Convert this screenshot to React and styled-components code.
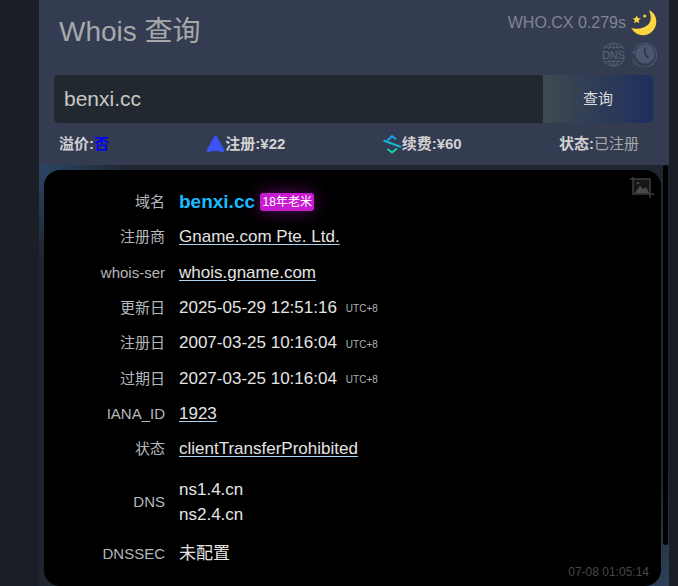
import React from "react";
import styled, { createGlobalStyle } from "styled-components";

const rows = [
  { label: "注册商", value: "Gname.com Pte. Ltd.", link: true },
  { label: "whois-ser", value: "whois.gname.com", link: true },
  { label: "更新日", value: "2025-05-29 12:51:16", utc: true },
  { label: "注册日", value: "2007-03-25 10:16:04", utc: true },
  { label: "过期日", value: "2027-03-25 10:16:04", utc: true },
  { label: "IANA_ID", value: "1923", link: true },
  { label: "状态", value: "clientTransferProhibited", link: true },
];

const MoonIcon = () => (
  <svg width="26" height="26" viewBox="0 0 26 26">
    <path
      d="M18 0C23 2.500 25.500 7 25.300 12 25 19.500 19 25.500 11.500 25.200 6.500 25 2.500 22 .3 17.700 2 18.500 4.500 19 6.500 18.700 14 18.400 20 14 19.700 8 19.600 5 19 2.500 18 0z"
      fill="#fcd53f"
    />
    <path d="M5.700 5.500l1.200 2.600 2.900.3-2.200 1.900.7 2.900-2.600-1.500-2.600 1.500.7-2.900L1.600 8.400l2.900-.3z" fill="#fcd53f" />
    <circle cx="13.700" cy="6" r="1.500" fill="#fcd53f" />
  </svg>
);

const DnsIcon = () => (
  <svg width="25" height="25" viewBox="0 0 25 25" fill="none" stroke="#4f576c" strokeWidth="1.200">
    <circle cx="12.500" cy="12.500" r="11.500" />
    <ellipse cx="12.500" cy="12.500" rx="5.500" ry="11.500" />
    <path d="M12.500 1v6M12.500 18v6M3 5.500h19M3 19.500h19" />
    <rect x="0" y="7.500" width="25" height="10" fill="#343c52" stroke="none" />
    <text x="12.500" y="16.500" textAnchor="middle" fontFamily="Liberation Sans" fontSize="11" fill="#5f677e" stroke="none">
      DNS
    </text>
  </svg>
);

const ClockIcon = () => (
  <svg width="26" height="26" viewBox="0 0 26 26" fill="none">
    <path d="M3 8.500A12 12 0 1 1 2 17.500" stroke="#4a5266" strokeWidth="1.400" />
    <path d="M-.2 11l3.800 2.600 1.800-4.500z" fill="#4a5266" />
    <circle cx="14" cy="13" r="9.500" fill="#4d566f" />
    <path d="M14 6.500V13l3.500 4" stroke="#2a3040" strokeWidth="1.400" />
  </svg>
);

const ArrowIcon = () => (
  <svg width="19" height="18" viewBox="0 0 19 18">
    <path
      d="M9.500.500c.5 0 .9.300 1.200.800l7.500 13.700c.5 1 .1 1.900-1 2.100-.5.100-1 0-1.500-.2-4-1.600-8.400-1.600-12.400 0-.5.200-1 .3-1.500.200-1.100-.2-1.500-1.100-1-2.100L8.300 1.300c.3-.5.700-.8 1.200-.800z"
      fill="#3b53f6"
    />
  </svg>
);

const RenewIcon = () => (
  <svg width="19" height="20" viewBox="0 0 19 20" fill="none" strokeWidth="2">
    <path d="M4.500 6.500L9 2l4 3.500" stroke="#1aa3f0" />
    <path d="M.5 6.500l17.500 6.500" stroke="#17b6c8" />
    <path d="M4.500 15l4.500 3.500 5-4" stroke="#12d6a6" />
  </svg>
);

const CropImageIcon = () => (
  <svg width="24" height="23" viewBox="0 0 24 23" fill="none" stroke="#3d3d3d" strokeWidth="1.500">
    <rect x="3" y="3" width="17" height="15" fill="#161616" stroke="none" />
    <path d="M3 1v17h21M0 3h20v19" />
    <path d="M5 17l5-7.500 3 3.500 3-2 3 6z" fill="#4a4a4a" stroke="none" />
    <circle cx="8" cy="7" r="1.300" fill="#4a4a4a" stroke="none" />
  </svg>
);

export default () => (
  <Page>
    <GlobalStyle />
    <Panel>
      <Header>
        <TitleRow>
          <Title>Whois 查询</Title>
          <Tools>
            <ToolRow>
              <Timing>WHO.CX 0.279s</Timing>
              <MoonIcon />
            </ToolRow>
            <ToolRow>
              <DnsIcon />
              <ClockIcon />
            </ToolRow>
          </Tools>
        </TitleRow>
        <SearchBar>
          <SearchInput defaultValue="benxi.cc" />
          <SearchButton>查询</SearchButton>
        </SearchBar>
        <Stats>
          <Stat>
            溢价:<Premium>否</Premium>
          </Stat>
          <Stat>
            <ArrowIcon />
            注册:¥22
          </Stat>
          <Stat>
            <RenewIcon />
            续费:¥60
          </Stat>
          <Stat>
            状态:<StatusText>已注册</StatusText>
          </Stat>
        </Stats>
      </Header>
      <Result>
        <Scrollbar />
        <Card>
          <ShotButton>
            <CropImageIcon />
          </ShotButton>
          <Row>
            <Label>域名</Label>
            <Value>
              <Domain>benxi.cc</Domain>
              <Badge>18年老米</Badge>
            </Value>
          </Row>
          {rows.map((r) => (
            <Row key={r.label}>
              <Label>{r.label}</Label>
              <Value>
                {r.link ? <LinkText href="#">{r.value}</LinkText> : r.value}
                {r.utc && <Utc>UTC+8</Utc>}
              </Value>
            </Row>
          ))}
          <Row $tall>
            <Label>DNS</Label>
            <Value>
              <NsList>
                <div>ns1.4.cn</div>
                <div>ns2.4.cn</div>
              </NsList>
            </Value>
          </Row>
          <Row>
            <Label>DNSSEC</Label>
            <Value>未配置</Value>
          </Row>
          <Stamp>07-08 01:05:14</Stamp>
        </Card>
      </Result>
    </Panel>
  </Page>
);

const GlobalStyle = createGlobalStyle`
  html, body {
    margin: 0;
    height: 100%;
    overflow: hidden;
    background: #1a1e26;
    font-family: "Liberation Sans", "Noto Sans CJK SC", sans-serif;
  }
`;

const Page = styled.div`
  height: 586px;
  padding-left: 39px;
  overflow: hidden;
`;

const Panel = styled.main`
  width: 630px;
  height: 586px;
  display: flex;
  flex-direction: column;
  background: #343c52;
  border-radius: 0 0 6px 6px;
`;

const Header = styled.header`
  height: 165px;
  box-sizing: border-box;
  padding: 0 16px 0 15px;
`;

const TitleRow = styled.div`
  height: 75px;
  display: flex;
  justify-content: space-between;
  align-items: flex-start;
  padding-left: 5px;
`;

const Title = styled.h1`
  margin: 14px 0 0;
  font-size: 28px;
  line-height: 36px;
  font-weight: 400;
  color: #a8a8a8;
`;

const Tools = styled.div`
  display: flex;
  flex-direction: column;
  align-items: flex-end;
  gap: 5px;
  padding-top: 10px;
  margin-right: -4px;
`;

const ToolRow = styled.div`
  display: flex;
  align-items: center;
  gap: 5px;
`;

const Timing = styled.span`
  font-size: 16px;
  color: #808692;
`;

const SearchBar = styled.form`
  display: flex;
  height: 48px;
  border-radius: 5px;
  overflow: hidden;
`;

const SearchInput = styled.input`
  flex: 1;
  min-width: 0;
  border: 0;
  outline: 0;
  padding: 0 10px;
  background: #22282f;
  color: #c8c8c8;
  font: 21px "Liberation Sans", "Noto Sans CJK SC", sans-serif;
`;

const SearchButton = styled.button`
  width: 110px;
  border: 0;
  padding: 0 0 3px;
  color: #dcdcdc;
  font: 15px "Liberation Sans", "Noto Sans CJK SC", sans-serif;
  background: linear-gradient(90deg, #3f494f, #1f2f5e);
`;

const Stats = styled.div`
  height: 42px;
  display: flex;
  justify-content: space-between;
  align-items: center;
  padding: 0 14px 0 5px;
`;

const Stat = styled.div`
  display: flex;
  align-items: center;
  font-size: 15px;
  line-height: 20px;
  font-weight: 700;
  color: #d2d2d2;
`;

const Premium = styled.span`
  color: #0000ff;
`;

const StatusText = styled.span`
  color: #a8a8a8;
  font-weight: 400;
`;

const Result = styled.section`
  position: relative;
  flex: 1;
  padding: 5px 8px 0 5px;
  min-height: 0;
  background:
    radial-gradient(circle at 0 0, #2a4766 0, transparent 90px),
    radial-gradient(circle at 100% 100%, #2d4059 0, transparent 110px),
    #20262f;
`;

const Scrollbar = styled.div`
  position: absolute;
  top: 0;
  right: 1px;
  width: 5px;
  height: 380px;
  background: #000;
  border-radius: 3px;
`;

const Card = styled.div`
  position: relative;
  height: 416px;
  box-sizing: border-box;
  padding-top: 14.400px;
  background: #000;
  border-radius: 16px;
`;

const ShotButton = styled.div`
  position: absolute;
  top: 6px;
  right: 7px;
  line-height: 0;
`;

const Row = styled.div`
  display: grid;
  grid-template-columns: 121px 1fr;
  column-gap: 14px;
  align-items: center;
  min-height: ${(p) => (p.$tall ? "70px" : "35.3px")};
`;

const Label = styled.div`
  text-align: right;
  font-size: 15px;
  line-height: 20px;
  color: #b4b8bc;
`;

const Value = styled.div`
  display: flex;
  align-items: center;
  font-size: 17px;
  line-height: 20px;
  color: #e4e4e4;
`;

const Domain = styled.span`
  font-size: 19px;
  font-weight: 700;
  color: #19bbff;
`;

const Badge = styled.span`
  margin-left: 5px;
  padding: 1px 2.500px;
  font-size: 12px;
  line-height: 16px;
  color: #fff;
  background: #c71bd0;
  border-radius: 3px;
  box-shadow: 0 0 18px rgba(199, 27, 208, 0.45);
`;

const LinkText = styled.a`
  color: #e4e4e4;
  text-decoration: underline;
  text-decoration-color: #a9d3f0;
  text-underline-offset: 2px;
`;

const Utc = styled.span`
  margin-left: 9px;
  padding-top: 3px;
  font-size: 10px;
  color: #b0b0b0;
`;

const NsList = styled.div`
  line-height: 25px;
`;

const Stamp = styled.div`
  position: absolute;
  right: 12px;
  bottom: 7px;
  font-size: 12px;
  color: #484848;
`;
